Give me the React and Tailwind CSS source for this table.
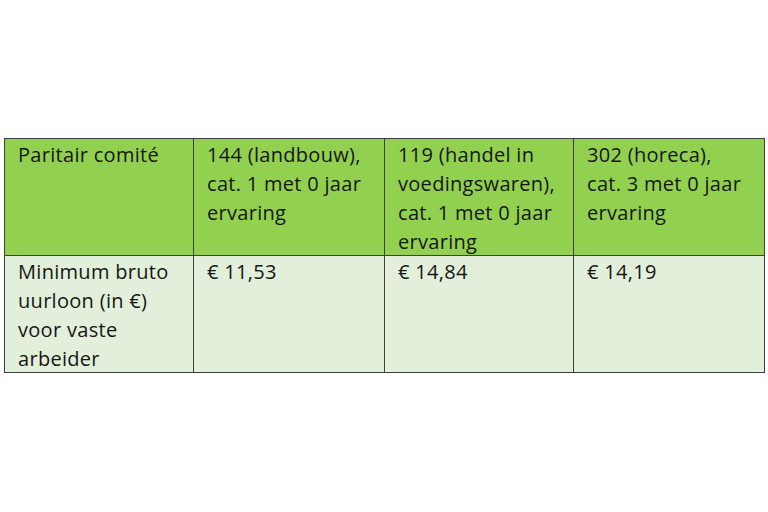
export default function App() {
  const header = [
    ['Paritair comité'],
    ['144 (landbouw),', 'cat. 1 met 0 jaar', 'ervaring'],
    ['119 (handel in', 'voedingswaren),', 'cat. 1 met 0 jaar', 'ervaring'],
    ['302 (horeca),', 'cat. 3 met 0 jaar', 'ervaring'],
  ];
  const row = [
    ['Minimum bruto', 'uurloon (in €)', 'voor vaste', 'arbeider'],
    ['€ 11,53'],
    ['€ 14,84'],
    ['€ 14,19'],
  ];

  const lines = (cell) =>
    cell.map((l, i) => (
      <span key={i} className="block whitespace-nowrap">
        {l}
      </span>
    ));

  return (
    <div className="w-[768px] h-[512px] bg-white pt-[138px] pl-[4px] font-['Open_Sans','Lato',sans-serif]">
      <table className="table-fixed border-collapse w-[760px] text-[20px] leading-[29px] tracking-[0.3px] text-[#161616]">
        <colgroup>
          <col className="w-[189px]" />
          <col className="w-[191px]" />
          <col className="w-[189px]" />
          <col className="w-[191px]" />
        </colgroup>
        <tbody>
          <tr className="bg-[#92d050] h-[117px]">
            {header.map((c, i) => (
              <td key={i} className="border border-[#3f3f3f] align-top pl-[13px] pt-0 pb-0">
                <div className="translate-y-[1px]">{lines(c)}</div>
              </td>
            ))}
          </tr>
          <tr className="bg-[#e2efda] h-[117px]">
            {row.map((c, i) => (
              <td key={i} className="border border-[#3f3f3f] align-top pl-[13px] pt-0 pb-0">
                <div className="translate-y-[1px]">{lines(c)}</div>
              </td>
            ))}
          </tr>
        </tbody>
      </table>
    </div>
  );
}
